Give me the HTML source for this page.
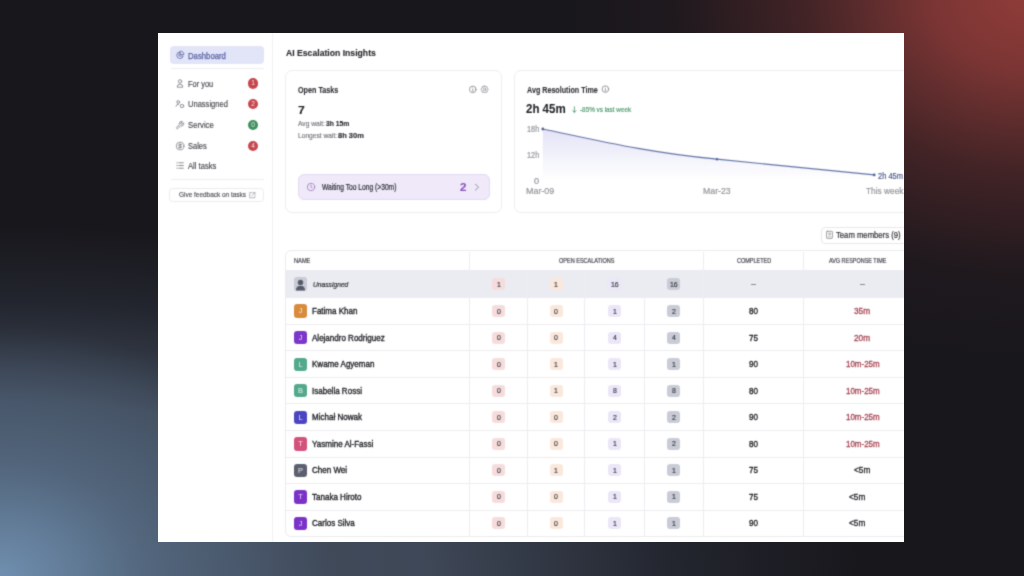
<!DOCTYPE html>
<html><head><meta charset="utf-8">
<style>
*{margin:0;padding:0;box-sizing:border-box}
html,body{width:1024px;height:576px;overflow:hidden}
body{position:relative;font-family:"Liberation Sans",sans-serif;color:#2a2b30;
background:
 radial-gradient(ellipse 470px 370px at 1030px -5px, rgba(144,60,57,1) 0%, rgba(132,56,54,.92) 20%, rgba(96,44,45,.58) 48%, rgba(50,30,34,.25) 76%, rgba(26,25,30,0) 100%),
 radial-gradient(ellipse 330px 250px at 0px 576px, rgba(114,146,180,.95) 0%, rgba(96,122,150,.55) 45%, rgba(70,86,106,0) 100%),
 radial-gradient(ellipse 860px 350px at 0px 576px, rgba(68,80,96,1) 0%, rgba(64,74,90,.95) 50%, rgba(44,50,62,.55) 78%, rgba(26,25,30,0) 100%),
 #18171c;}
.a{position:absolute}
.t{position:absolute;white-space:nowrap;line-height:1;transform-origin:0 0}
.panel{left:158px;top:33px;width:746px;height:509px;background:#fff;overflow:hidden;filter:url(#soft)}
.badge{width:10.6px;height:10.6px;border-radius:50%;color:rgba(255,255,255,.85);font-size:6.6px;text-align:center;line-height:10.6px}
.av{width:13px;height:13.4px;border-radius:3px;color:rgba(255,255,255,.85);font-size:7.4px;line-height:13.4px;text-align:center;overflow:hidden}
</style></head><body>
<svg width="0" height="0" style="position:absolute"><filter id="soft" x="0" y="0" width="100%" height="100%" color-interpolation-filters="sRGB"><feConvolveMatrix order="3" kernelMatrix="1 4 1 4 16 4 1 4 1" edgeMode="duplicate" preserveAlpha="true"/></filter></svg>
<div class="a panel">
<div class="a" style="left:0px;top:0px;width:115px;height:509px;background:#fff;border-right:1px solid #f0f0f4"></div>
<div class="a" style="left:11.8px;top:13px;width:94.4px;height:17.9px;background:#e2e5f8;border-radius:4px"></div>
<div class="a" style="left:12.5px;top:35px;width:93.7px;height:1px;background:#efeff2"></div>
<div class="a" style="left:12.5px;top:145.5px;width:93.7px;height:1px;background:#efeff2"></div>
<div class="a" style="left:11.4px;top:155.2px;width:95px;height:13.4px;border:1px solid #ececf0;border-radius:3.5px;background:#fff"></div>
<div class="a badge" style="left:89.8px;top:45px;background:#c6454d">1</div>
<div class="a badge" style="left:89.8px;top:65.9px;background:#c6454d">2</div>
<div class="a badge" style="left:89.8px;top:86.8px;background:#3f8f5f">0</div>
<div class="a badge" style="left:89.8px;top:107.6px;background:#c6454d">4</div>
<div class="a" style="left:127.3px;top:36.7px;width:216.9px;height:143.8px;border:1px solid #eeeef3;border-radius:7px;background:#fff"></div>
<div class="a" style="left:355.7px;top:36.7px;width:586.3px;height:143.8px;border:1px solid #eeeef3;border-radius:7px;background:#fff"></div>
<div class="a" style="left:140px;top:140.5px;width:192px;height:26.2px;border:1px solid #e3d9f3;border-radius:6px;background:#efe9f9"></div>
<div class="a" style="left:663.4px;top:193.5px;width:128.6px;height:17.1px;border:1px solid #e9e9ed;border-radius:4px;background:#fff"></div>
<div class="a" style="left:127.3px;top:217px;width:814.7px;height:287.2px;border:1px solid #ececf0;border-radius:6px;background:#fff"></div>
<div class="a" style="left:128.3px;top:237.2px;width:713.7px;height:27.6px;background:#ebebf2"></div>
<div class="a" style="left:128.3px;top:264.3px;width:713.7px;height:1px;background:#ededf1"></div>
<div class="a" style="left:128.3px;top:290.84px;width:713.7px;height:1px;background:#ededf1"></div>
<div class="a" style="left:128.3px;top:317.38px;width:713.7px;height:1px;background:#ededf1"></div>
<div class="a" style="left:128.3px;top:343.92px;width:713.7px;height:1px;background:#ededf1"></div>
<div class="a" style="left:128.3px;top:370.46px;width:713.7px;height:1px;background:#ededf1"></div>
<div class="a" style="left:128.3px;top:397px;width:713.7px;height:1px;background:#ededf1"></div>
<div class="a" style="left:128.3px;top:423.54px;width:713.7px;height:1px;background:#ededf1"></div>
<div class="a" style="left:128.3px;top:450.08px;width:713.7px;height:1px;background:#ededf1"></div>
<div class="a" style="left:128.3px;top:476.62px;width:713.7px;height:1px;background:#ededf1"></div>
<div class="a" style="left:311.1px;top:218.5px;width:1px;height:285px;background:#ededf1"></div>
<div class="a" style="left:544.8px;top:218.5px;width:1px;height:285px;background:#ededf1"></div>
<div class="a" style="left:645px;top:218.5px;width:1px;height:285px;background:#ededf1"></div>
<div class="a" style="left:369.3px;top:237.2px;width:1px;height:266.3px;background:#ededf1"></div>
<div class="a" style="left:425.9px;top:237.2px;width:1px;height:266.3px;background:#ededf1"></div>
<div class="a" style="left:486.1px;top:237.2px;width:1px;height:266.3px;background:#ededf1"></div>
<div class="a" style="left:334.2px;top:245px;width:13px;height:12px;background:#f6dcdc;border-radius:3px"></div>
<div class="a" style="left:391.6px;top:245px;width:13px;height:12px;background:#fbe8dc;border-radius:3px"></div>
<div class="a" style="left:450px;top:245px;width:13px;height:12px;background:#ebe7f8;border-radius:3px"></div>
<div class="a" style="left:509.45px;top:245px;width:13px;height:12px;background:#c9ccd6;border-radius:3px"></div>
<svg class="a" style="left:136px;top:244.2px" width="13" height="14" viewBox="0 0 13 14"><rect x="0" y="0" width="13" height="14" rx="3" fill="#c9cbd6"/><circle cx="6.5" cy="5.4" r="2.7" fill="#575b69"/><path d="M1.9 13.6 Q1.9 8.7 6.5 8.7 Q11.1 8.7 11.1 13.6 Z" fill="#575b69"/></svg>
<div class="a" style="left:334.2px;top:272.07px;width:13px;height:12px;background:#f6dcdc;border-radius:3px"></div>
<div class="a" style="left:391.6px;top:272.07px;width:13px;height:12px;background:#fbe8dc;border-radius:3px"></div>
<div class="a" style="left:450px;top:272.07px;width:13px;height:12px;background:#ebe7f8;border-radius:3px"></div>
<div class="a" style="left:509.45px;top:272.07px;width:13px;height:12px;background:#c9ccd6;border-radius:3px"></div>
<div class="a av" style="left:136px;top:271.47px;background:#d98b3c">J</div>
<div class="a" style="left:334.2px;top:298.61px;width:13px;height:12px;background:#f6dcdc;border-radius:3px"></div>
<div class="a" style="left:391.6px;top:298.61px;width:13px;height:12px;background:#fbe8dc;border-radius:3px"></div>
<div class="a" style="left:450px;top:298.61px;width:13px;height:12px;background:#ebe7f8;border-radius:3px"></div>
<div class="a" style="left:509.45px;top:298.61px;width:13px;height:12px;background:#c9ccd6;border-radius:3px"></div>
<div class="a av" style="left:136px;top:298.01px;background:#7c36c9">J</div>
<div class="a" style="left:334.2px;top:325.15px;width:13px;height:12px;background:#f6dcdc;border-radius:3px"></div>
<div class="a" style="left:391.6px;top:325.15px;width:13px;height:12px;background:#fbe8dc;border-radius:3px"></div>
<div class="a" style="left:450px;top:325.15px;width:13px;height:12px;background:#ebe7f8;border-radius:3px"></div>
<div class="a" style="left:509.45px;top:325.15px;width:13px;height:12px;background:#c9ccd6;border-radius:3px"></div>
<div class="a av" style="left:136px;top:324.55px;background:#52a98c">L</div>
<div class="a" style="left:334.2px;top:351.69px;width:13px;height:12px;background:#f6dcdc;border-radius:3px"></div>
<div class="a" style="left:391.6px;top:351.69px;width:13px;height:12px;background:#fbe8dc;border-radius:3px"></div>
<div class="a" style="left:450px;top:351.69px;width:13px;height:12px;background:#ebe7f8;border-radius:3px"></div>
<div class="a" style="left:509.45px;top:351.69px;width:13px;height:12px;background:#c9ccd6;border-radius:3px"></div>
<div class="a av" style="left:136px;top:351.09px;background:#52a98c">B</div>
<div class="a" style="left:334.2px;top:378.23px;width:13px;height:12px;background:#f6dcdc;border-radius:3px"></div>
<div class="a" style="left:391.6px;top:378.23px;width:13px;height:12px;background:#fbe8dc;border-radius:3px"></div>
<div class="a" style="left:450px;top:378.23px;width:13px;height:12px;background:#ebe7f8;border-radius:3px"></div>
<div class="a" style="left:509.45px;top:378.23px;width:13px;height:12px;background:#c9ccd6;border-radius:3px"></div>
<div class="a av" style="left:136px;top:377.63px;background:#4c45c2">L</div>
<div class="a" style="left:334.2px;top:404.77px;width:13px;height:12px;background:#f6dcdc;border-radius:3px"></div>
<div class="a" style="left:391.6px;top:404.77px;width:13px;height:12px;background:#fbe8dc;border-radius:3px"></div>
<div class="a" style="left:450px;top:404.77px;width:13px;height:12px;background:#ebe7f8;border-radius:3px"></div>
<div class="a" style="left:509.45px;top:404.77px;width:13px;height:12px;background:#c9ccd6;border-radius:3px"></div>
<div class="a av" style="left:136px;top:404.17px;background:#d4517c">T</div>
<div class="a" style="left:334.2px;top:431.31px;width:13px;height:12px;background:#f6dcdc;border-radius:3px"></div>
<div class="a" style="left:391.6px;top:431.31px;width:13px;height:12px;background:#fbe8dc;border-radius:3px"></div>
<div class="a" style="left:450px;top:431.31px;width:13px;height:12px;background:#ebe7f8;border-radius:3px"></div>
<div class="a" style="left:509.45px;top:431.31px;width:13px;height:12px;background:#c9ccd6;border-radius:3px"></div>
<div class="a av" style="left:136px;top:430.71px;background:#5b5f6f">P</div>
<div class="a" style="left:334.2px;top:457.85px;width:13px;height:12px;background:#f6dcdc;border-radius:3px"></div>
<div class="a" style="left:391.6px;top:457.85px;width:13px;height:12px;background:#fbe8dc;border-radius:3px"></div>
<div class="a" style="left:450px;top:457.85px;width:13px;height:12px;background:#ebe7f8;border-radius:3px"></div>
<div class="a" style="left:509.45px;top:457.85px;width:13px;height:12px;background:#c9ccd6;border-radius:3px"></div>
<div class="a av" style="left:136px;top:457.25px;background:#7b32c8">T</div>
<div class="a" style="left:334.2px;top:484.39px;width:13px;height:12px;background:#f6dcdc;border-radius:3px"></div>
<div class="a" style="left:391.6px;top:484.39px;width:13px;height:12px;background:#fbe8dc;border-radius:3px"></div>
<div class="a" style="left:450px;top:484.39px;width:13px;height:12px;background:#ebe7f8;border-radius:3px"></div>
<div class="a" style="left:509.45px;top:484.39px;width:13px;height:12px;background:#c9ccd6;border-radius:3px"></div>
<div class="a av" style="left:136px;top:483.79px;background:#7b32c8">J</div>
<svg class="a" style="left:0;top:0" width="746" height="509" viewBox="158 33 746 509">
  <defs><linearGradient id="ga" x1="0" y1="0" x2="0" y2="1"><stop offset="0" stop-color="#e3e3f6"/><stop offset="1" stop-color="#ffffff"/></linearGradient></defs>
  <g fill="none" stroke="#7e7f86" stroke-width="0.85" stroke-linecap="round" stroke-linejoin="round">
    <!-- dashboard pie -->
    <g stroke="#6b72a8" stroke-width="0.9">
      <path d="M179.2 52 A3.3 3.3 0 1 0 183.2 56 L179.2 56 Z"/>
      <path d="M180.6 51.2 A3 3 0 0 1 183.9 54.5 L180.6 54.5 Z"/>
    </g>
    <!-- person -->
    <circle cx="180" cy="81.4" r="1.7"/>
    <path d="M177.2 86.8 Q177.2 84.1 180 84.1 Q182.8 84.1 182.8 86.8 Z"/>
    <!-- unassigned -->
    <circle cx="178.2" cy="102" r="1.4"/>
    <path d="M176 106.3 Q176.4 104 178.8 104"/>
    <circle cx="182" cy="106" r="1.7"/>
    <!-- wrench -->
    <g transform="translate(175.4 120.7) scale(0.38)" stroke-width="2.3">
      <path d="M14.7 6.3a1 1 0 0 0 0 1.4l1.6 1.6a1 1 0 0 0 1.4 0l3.77-3.77a6 6 0 0 1-7.940 7.94l-6.91 6.91a2.12 2.12 0 0 1-3-3l6.91-6.910a6 6 0 0 1 7.94-7.94l-3.76 3.76z"/>
    </g>
    <!-- dollar -->
    <g transform="translate(175.5 141.4) scale(0.385)" stroke-width="2.1">
      <circle cx="12" cy="12" r="10"/>
      <path d="M16 8h-6a2 2 0 1 0 0 4h4a2 2 0 1 1 0 4H8M12 18V6"/>
    </g>
    <!-- list -->
    <path d="M176.9 162.8h.5M176.9 165.5h.5M176.9 168.2h.5M178.9 162.8h4.4M178.9 165.5h4.4M178.9 168.2h4.4" stroke-width="0.9"/>
    <!-- external link -->
    <path d="M251.6 192.6 H249.7 V197.8 H254.9 V195.9 M252.8 192.6 H254.9 V194.7 M254.9 192.6 L251.9 195.6" stroke="#9a9ba2" stroke-width="0.7"/>
    <!-- card1 info -->
    <g transform="translate(472.8 89.4) scale(0.3)" stroke-width="2.6"><circle cx="0" cy="0" r="11"/><path d="M0 -1.5 V7"/></g>
    <!-- gear -->
    <g transform="translate(484.6 89.4) scale(0.3)" stroke-width="2.4"><circle cx="0" cy="0" r="4"/><path d="M0 -12 L3 -8.5 L7.5 -9.5 L8.5 -5 L12 0 L8.5 5 L7.5 9.5 L3 8.5 L0 12 L-3 8.5 L-7.5 9.5 L-8.5 5 L-12 0 L-8.5 -5 L-7.5 -9.5 L-3 -8.5 Z"/></g>
    <!-- clock -->
    <g stroke="#9d80ba">
      <circle cx="311" cy="187" r="3.7"/>
      <path d="M311 185 V187.2 L312.3 188.1"/>
    </g>
    <!-- chevron -->
    <path d="M475.3 184.2 L478.6 187.2 L475.3 190.2" stroke="#8c8d94" stroke-width="0.9"/>
    <!-- card2 info -->
    <g transform="translate(605.4 89.1) scale(0.3)" stroke-width="2.6"><circle cx="0" cy="0" r="11"/><path d="M0 -1.5 V7"/></g>
    <!-- arrow down -->
    <path d="M574.4 106.8 V112.3 M572.7 110.6 L574.4 112.4 L576.1 110.6" stroke="#4f9a6e"/>
    <!-- team icon -->
    <rect x="826.6" y="231.3" width="5.8" height="7.1" rx="0.6" stroke="#7d7e85" stroke-width="0.75"/>
    <circle cx="829.5" cy="233.9" r="0.9" stroke="#7d7e85" stroke-width="0.6"/>
    <path d="M828 236.9 Q829.5 235.3 831 236.9" stroke="#7d7e85" stroke-width="0.6"/>
  </g>
  <circle cx="472.8" cy="87.4" r="0.45" fill="#8c8d94"/>
  <circle cx="605.4" cy="87.1" r="0.45" fill="#8c8d94"/>
  <!-- chart -->
  <path d="M542.8 129 C 600 141, 650 153, 717 159.2 C 780 165, 830 170, 874.2 174.9 L874.2 180 L542.8 180 Z" fill="url(#ga)"/>
  <path d="M542.8 129 C 600 141, 650 153, 717 159.2 C 780 165, 830 170, 874.2 174.9" fill="none" stroke="#6373a6" stroke-width="1.2"/>
  <circle cx="542.8" cy="129" r="1.4" fill="#55629a"/>
  <circle cx="717" cy="159.2" r="1.2" fill="#55629a"/>
  <circle cx="874.2" cy="174.9" r="1.4" fill="#55629a"/>
</svg>
<div class="t" style="left:30.11px;top:18.59px;font-size:8.84px;color:#5860a0;transform:scaleX(0.877);-webkit-text-stroke:0.25px #5860a0;">Dashboard</div>
<div class="t" style="left:30.03px;top:46.59px;font-size:8.84px;color:#46474e;transform:scaleX(0.840);-webkit-text-stroke:0.15px #46474e;">For you</div>
<div class="t" style="left:30.02px;top:67.29px;font-size:8.84px;color:#46474e;transform:scaleX(0.855);-webkit-text-stroke:0.15px #46474e;">Unassigned</div>
<div class="t" style="left:29.91px;top:88.49px;font-size:8.84px;color:#46474e;transform:scaleX(0.876);-webkit-text-stroke:0.15px #46474e;">Service</div>
<div class="t" style="left:29.92px;top:109.29px;font-size:8.84px;color:#46474e;transform:scaleX(0.849);-webkit-text-stroke:0.15px #46474e;">Sales</div>
<div class="t" style="left:29.92px;top:129.09px;font-size:8.84px;color:#46474e;transform:scaleX(0.863);-webkit-text-stroke:0.15px #46474e;">All tasks</div>
<div class="t" style="left:21.38px;top:158.2px;font-size:8.12px;color:#4a4b52;transform:scaleX(0.795);-webkit-text-stroke:0.15px #4a4b52;">Give feedback on tasks</div>
<div class="t" style="left:127.87px;top:15.29px;font-size:9.42px;color:#26272c;font-weight:bold;transform:scaleX(0.919);-webkit-text-stroke:0.1px #26272c;">AI Escalation Insights</div>
<div class="t" style="left:140.04px;top:52.56px;font-size:8.41px;color:#2e2f35;font-weight:bold;transform:scaleX(0.857);-webkit-text-stroke:0.1px #2e2f35;">Open Tasks</div>
<div class="t" style="left:139.79px;top:71.64px;font-size:11.59px;color:#1f2025;font-weight:bold;transform:scaleX(1.058);-webkit-text-stroke:0.1px #1f2025;">7</div>
<div class="t" style="left:140.07px;top:87.49px;font-size:7.54px;color:#7a7b82;transform:scaleX(0.885);-webkit-text-stroke:0.2px #7a7b82;">Avg wait:</div>
<div class="t" style="left:168.06px;top:87.49px;font-size:7.54px;color:#222328;font-weight:bold;transform:scaleX(0.899);-webkit-text-stroke:0.1px #222328;">3h 15m</div>
<div class="t" style="left:140.07px;top:99.39px;font-size:7.54px;color:#7a7b82;transform:scaleX(0.882);-webkit-text-stroke:0.2px #7a7b82;">Longest wait:</div>
<div class="t" style="left:180.03px;top:99.39px;font-size:7.54px;color:#222328;font-weight:bold;transform:scaleX(0.994);-webkit-text-stroke:0.1px #222328;">8h 30m</div>
<div class="t" style="left:163.67px;top:150.26px;font-size:8.41px;color:#2a2b30;transform:scaleX(0.794);-webkit-text-stroke:0.2px #2a2b30;">Waiting Too Long (&gt;30m)</div>
<div class="t" style="left:302.42px;top:149.53px;font-size:10.43px;color:#8a52b8;font-weight:bold;transform:scaleX(1.115);-webkit-text-stroke:0.1px #8a52b8;">2</div>
<div class="t" style="left:368.54px;top:52.59px;font-size:8.48px;color:#2e2f35;font-weight:bold;transform:scaleX(0.845);-webkit-text-stroke:0.1px #2e2f35;">Avg Resolution Time</div>
<div class="t" style="left:368.32px;top:70.06px;font-size:12.75px;color:#1f2025;font-weight:bold;transform:scaleX(0.902);-webkit-text-stroke:0.1px #1f2025;">2h 45m</div>
<div class="t" style="left:421.68px;top:73.29px;font-size:7.54px;color:#4f9a6e;transform:scaleX(0.842);-webkit-text-stroke:0.2px #4f9a6e;">-85% vs last week</div>
<div class="t" style="left:368.53px;top:91.91px;font-size:8.7px;color:#94959b;transform:scaleX(0.844);-webkit-text-stroke:0.2px #94959b;">18h</div>
<div class="t" style="left:368.53px;top:117.91px;font-size:8.7px;color:#94959b;transform:scaleX(0.844);-webkit-text-stroke:0.2px #94959b;">12h</div>
<div class="t" style="left:375.74px;top:143.89px;font-size:8.84px;color:#94959b;transform:scaleX(1.040);-webkit-text-stroke:0.2px #94959b;">0</div>
<div class="t" style="left:368.45px;top:152.97px;font-size:9.57px;color:#94959b;transform:scaleX(0.932);-webkit-text-stroke:0.2px #94959b;">Mar-09</div>
<div class="t" style="left:545.46px;top:152.97px;font-size:9.57px;color:#94959b;transform:scaleX(0.915);-webkit-text-stroke:0.2px #94959b;">Mar-23</div>
<div class="t" style="left:707.78px;top:153.07px;font-size:9.57px;color:#94959b;transform:scaleX(0.870);-webkit-text-stroke:0.2px #94959b;">This week</div>
<div class="t" style="left:719.63px;top:138.51px;font-size:8.7px;color:#4a5888;transform:scaleX(0.860);-webkit-text-stroke:0.2px #4a5888;">2h 45m</div>
<div class="t" style="left:678.32px;top:197.93px;font-size:8.55px;color:#2e2f35;transform:scaleX(0.900);-webkit-text-stroke:0.2px #2e2f35;">Team members (9)</div>
<div class="t" style="left:135.82px;top:224.58px;font-size:6.38px;color:#45464d;transform:scaleX(0.891);-webkit-text-stroke:0.2px #45464d;">NAME</div>
<div class="t" style="left:400.82px;top:224.62px;font-size:6.45px;color:#45464d;transform:scaleX(0.859);-webkit-text-stroke:0.2px #45464d;">OPEN ESCALATIONS</div>
<div class="t" style="left:578.72px;top:224.62px;font-size:6.45px;color:#45464d;transform:scaleX(0.855);-webkit-text-stroke:0.2px #45464d;">COMPLETED</div>
<div class="t" style="left:671.03px;top:224.62px;font-size:6.45px;color:#45464d;transform:scaleX(0.847);-webkit-text-stroke:0.2px #45464d;">AVG RESPONSE TIME</div>
<div class="t" style="left:154.87px;top:248.24px;font-size:7.25px;color:#2e2f35;font-style:italic;transform:scaleX(0.923);-webkit-text-stroke:0.2px #2e2f35;">Unassigned</div>
<div class="t" style="left:338.77px;top:247.59px;font-size:7.54px;color:#34353a;transform:scaleX(0.920);-webkit-text-stroke:0.15px #34353a;">1</div>
<div class="t" style="left:396.17px;top:247.59px;font-size:7.54px;color:#34353a;transform:scaleX(0.920);-webkit-text-stroke:0.15px #34353a;">1</div>
<div class="t" style="left:452.65px;top:247.59px;font-size:7.54px;color:#34353a;transform:scaleX(0.920);-webkit-text-stroke:0.15px #34353a;">16</div>
<div class="t" style="left:512.1px;top:247.59px;font-size:7.54px;color:#34353a;transform:scaleX(0.920);-webkit-text-stroke:0.15px #34353a;">16</div>
<div class="t" style="left:154.1px;top:274.12px;font-size:8.77px;color:#1e1f24;transform:scaleX(0.915);-webkit-text-stroke:0.35px #1e1f24;">Fatima Khan</div>
<div class="t" style="left:338.77px;top:274.66px;font-size:7.54px;color:#34353a;transform:scaleX(0.920);-webkit-text-stroke:0.15px #34353a;">0</div>
<div class="t" style="left:396.17px;top:274.66px;font-size:7.54px;color:#34353a;transform:scaleX(0.920);-webkit-text-stroke:0.15px #34353a;">0</div>
<div class="t" style="left:454.57px;top:274.66px;font-size:7.54px;color:#34353a;transform:scaleX(0.920);-webkit-text-stroke:0.15px #34353a;">1</div>
<div class="t" style="left:514.02px;top:274.66px;font-size:7.54px;color:#34353a;transform:scaleX(0.920);-webkit-text-stroke:0.15px #34353a;">2</div>
<div class="t" style="left:590.91px;top:274.03px;font-size:8.99px;color:#1e1f24;transform:scaleX(0.900);-webkit-text-stroke:0.35px #1e1f24;">80</div>
<div class="t" style="left:696.37px;top:274.03px;font-size:8.99px;color:#a3414f;transform:scaleX(0.920);-webkit-text-stroke:0.3px #a3414f;">35m</div>
<div class="t" style="left:154.1px;top:300.66px;font-size:8.77px;color:#1e1f24;transform:scaleX(0.915);-webkit-text-stroke:0.35px #1e1f24;">Alejandro Rodriguez</div>
<div class="t" style="left:338.77px;top:301.2px;font-size:7.54px;color:#34353a;transform:scaleX(0.920);-webkit-text-stroke:0.15px #34353a;">0</div>
<div class="t" style="left:396.17px;top:301.2px;font-size:7.54px;color:#34353a;transform:scaleX(0.920);-webkit-text-stroke:0.15px #34353a;">0</div>
<div class="t" style="left:454.57px;top:301.2px;font-size:7.54px;color:#34353a;transform:scaleX(0.920);-webkit-text-stroke:0.15px #34353a;">4</div>
<div class="t" style="left:514.02px;top:301.2px;font-size:7.54px;color:#34353a;transform:scaleX(0.920);-webkit-text-stroke:0.15px #34353a;">4</div>
<div class="t" style="left:590.91px;top:300.57px;font-size:8.99px;color:#1e1f24;transform:scaleX(0.900);-webkit-text-stroke:0.35px #1e1f24;">75</div>
<div class="t" style="left:696.37px;top:300.57px;font-size:8.99px;color:#a3414f;transform:scaleX(0.920);-webkit-text-stroke:0.3px #a3414f;">20m</div>
<div class="t" style="left:154.1px;top:327.2px;font-size:8.77px;color:#1e1f24;transform:scaleX(0.915);-webkit-text-stroke:0.35px #1e1f24;">Kwame Agyeman</div>
<div class="t" style="left:338.77px;top:327.74px;font-size:7.54px;color:#34353a;transform:scaleX(0.920);-webkit-text-stroke:0.15px #34353a;">0</div>
<div class="t" style="left:396.17px;top:327.74px;font-size:7.54px;color:#34353a;transform:scaleX(0.920);-webkit-text-stroke:0.15px #34353a;">1</div>
<div class="t" style="left:454.57px;top:327.74px;font-size:7.54px;color:#34353a;transform:scaleX(0.920);-webkit-text-stroke:0.15px #34353a;">1</div>
<div class="t" style="left:514.02px;top:327.74px;font-size:7.54px;color:#34353a;transform:scaleX(0.920);-webkit-text-stroke:0.15px #34353a;">1</div>
<div class="t" style="left:590.91px;top:327.11px;font-size:8.99px;color:#1e1f24;transform:scaleX(0.900);-webkit-text-stroke:0.35px #1e1f24;">90</div>
<div class="t" style="left:687.6px;top:327.11px;font-size:8.99px;color:#a3414f;transform:scaleX(0.887);-webkit-text-stroke:0.3px #a3414f;">10m-25m</div>
<div class="t" style="left:154.1px;top:353.74px;font-size:8.77px;color:#1e1f24;transform:scaleX(0.915);-webkit-text-stroke:0.35px #1e1f24;">Isabella Rossi</div>
<div class="t" style="left:338.77px;top:354.28px;font-size:7.54px;color:#34353a;transform:scaleX(0.920);-webkit-text-stroke:0.15px #34353a;">0</div>
<div class="t" style="left:396.17px;top:354.28px;font-size:7.54px;color:#34353a;transform:scaleX(0.920);-webkit-text-stroke:0.15px #34353a;">1</div>
<div class="t" style="left:454.57px;top:354.28px;font-size:7.54px;color:#34353a;transform:scaleX(0.920);-webkit-text-stroke:0.15px #34353a;">8</div>
<div class="t" style="left:514.02px;top:354.28px;font-size:7.54px;color:#34353a;transform:scaleX(0.920);-webkit-text-stroke:0.15px #34353a;">8</div>
<div class="t" style="left:590.91px;top:353.65px;font-size:8.99px;color:#1e1f24;transform:scaleX(0.900);-webkit-text-stroke:0.35px #1e1f24;">80</div>
<div class="t" style="left:687.6px;top:353.65px;font-size:8.99px;color:#a3414f;transform:scaleX(0.887);-webkit-text-stroke:0.3px #a3414f;">10m-25m</div>
<div class="t" style="left:154.1px;top:380.28px;font-size:8.77px;color:#1e1f24;transform:scaleX(0.915);-webkit-text-stroke:0.35px #1e1f24;">Michał Nowak</div>
<div class="t" style="left:338.77px;top:380.82px;font-size:7.54px;color:#34353a;transform:scaleX(0.920);-webkit-text-stroke:0.15px #34353a;">0</div>
<div class="t" style="left:396.17px;top:380.82px;font-size:7.54px;color:#34353a;transform:scaleX(0.920);-webkit-text-stroke:0.15px #34353a;">0</div>
<div class="t" style="left:454.57px;top:380.82px;font-size:7.54px;color:#34353a;transform:scaleX(0.920);-webkit-text-stroke:0.15px #34353a;">2</div>
<div class="t" style="left:514.02px;top:380.82px;font-size:7.54px;color:#34353a;transform:scaleX(0.920);-webkit-text-stroke:0.15px #34353a;">2</div>
<div class="t" style="left:590.91px;top:380.19px;font-size:8.99px;color:#1e1f24;transform:scaleX(0.900);-webkit-text-stroke:0.35px #1e1f24;">90</div>
<div class="t" style="left:687.6px;top:380.19px;font-size:8.99px;color:#a3414f;transform:scaleX(0.887);-webkit-text-stroke:0.3px #a3414f;">10m-25m</div>
<div class="t" style="left:154.1px;top:406.82px;font-size:8.77px;color:#1e1f24;transform:scaleX(0.915);-webkit-text-stroke:0.35px #1e1f24;">Yasmine Al-Fassi</div>
<div class="t" style="left:338.77px;top:407.36px;font-size:7.54px;color:#34353a;transform:scaleX(0.920);-webkit-text-stroke:0.15px #34353a;">0</div>
<div class="t" style="left:396.17px;top:407.36px;font-size:7.54px;color:#34353a;transform:scaleX(0.920);-webkit-text-stroke:0.15px #34353a;">0</div>
<div class="t" style="left:454.57px;top:407.36px;font-size:7.54px;color:#34353a;transform:scaleX(0.920);-webkit-text-stroke:0.15px #34353a;">1</div>
<div class="t" style="left:514.02px;top:407.36px;font-size:7.54px;color:#34353a;transform:scaleX(0.920);-webkit-text-stroke:0.15px #34353a;">2</div>
<div class="t" style="left:590.91px;top:406.73px;font-size:8.99px;color:#1e1f24;transform:scaleX(0.900);-webkit-text-stroke:0.35px #1e1f24;">80</div>
<div class="t" style="left:687.6px;top:406.73px;font-size:8.99px;color:#a3414f;transform:scaleX(0.887);-webkit-text-stroke:0.3px #a3414f;">10m-25m</div>
<div class="t" style="left:154.1px;top:433.36px;font-size:8.77px;color:#1e1f24;transform:scaleX(0.915);-webkit-text-stroke:0.35px #1e1f24;">Chen Wei</div>
<div class="t" style="left:338.77px;top:433.9px;font-size:7.54px;color:#34353a;transform:scaleX(0.920);-webkit-text-stroke:0.15px #34353a;">0</div>
<div class="t" style="left:396.17px;top:433.9px;font-size:7.54px;color:#34353a;transform:scaleX(0.920);-webkit-text-stroke:0.15px #34353a;">1</div>
<div class="t" style="left:454.57px;top:433.9px;font-size:7.54px;color:#34353a;transform:scaleX(0.920);-webkit-text-stroke:0.15px #34353a;">1</div>
<div class="t" style="left:514.02px;top:433.9px;font-size:7.54px;color:#34353a;transform:scaleX(0.920);-webkit-text-stroke:0.15px #34353a;">1</div>
<div class="t" style="left:590.91px;top:433.27px;font-size:8.99px;color:#1e1f24;transform:scaleX(0.900);-webkit-text-stroke:0.35px #1e1f24;">75</div>
<div class="t" style="left:696.26px;top:433.27px;font-size:8.99px;color:#1e1f24;transform:scaleX(0.920);-webkit-text-stroke:0.3px #1e1f24;">&lt;5m</div>
<div class="t" style="left:154.1px;top:459.9px;font-size:8.77px;color:#1e1f24;transform:scaleX(0.915);-webkit-text-stroke:0.35px #1e1f24;">Tanaka Hiroto</div>
<div class="t" style="left:338.77px;top:460.44px;font-size:7.54px;color:#34353a;transform:scaleX(0.920);-webkit-text-stroke:0.15px #34353a;">0</div>
<div class="t" style="left:396.17px;top:460.44px;font-size:7.54px;color:#34353a;transform:scaleX(0.920);-webkit-text-stroke:0.15px #34353a;">0</div>
<div class="t" style="left:454.57px;top:460.44px;font-size:7.54px;color:#34353a;transform:scaleX(0.920);-webkit-text-stroke:0.15px #34353a;">1</div>
<div class="t" style="left:514.02px;top:460.44px;font-size:7.54px;color:#34353a;transform:scaleX(0.920);-webkit-text-stroke:0.15px #34353a;">1</div>
<div class="t" style="left:590.91px;top:459.81px;font-size:8.99px;color:#1e1f24;transform:scaleX(0.900);-webkit-text-stroke:0.35px #1e1f24;">75</div>
<div class="t" style="left:691.36px;top:459.81px;font-size:8.99px;color:#1e1f24;transform:scaleX(0.920);-webkit-text-stroke:0.3px #1e1f24;">&lt;5m</div>
<div class="t" style="left:154.1px;top:486.44px;font-size:8.77px;color:#1e1f24;transform:scaleX(0.915);-webkit-text-stroke:0.35px #1e1f24;">Carlos Silva</div>
<div class="t" style="left:338.77px;top:486.98px;font-size:7.54px;color:#34353a;transform:scaleX(0.920);-webkit-text-stroke:0.15px #34353a;">0</div>
<div class="t" style="left:396.17px;top:486.98px;font-size:7.54px;color:#34353a;transform:scaleX(0.920);-webkit-text-stroke:0.15px #34353a;">0</div>
<div class="t" style="left:454.57px;top:486.98px;font-size:7.54px;color:#34353a;transform:scaleX(0.920);-webkit-text-stroke:0.15px #34353a;">1</div>
<div class="t" style="left:514.02px;top:486.98px;font-size:7.54px;color:#34353a;transform:scaleX(0.920);-webkit-text-stroke:0.15px #34353a;">1</div>
<div class="t" style="left:590.91px;top:486.35px;font-size:8.99px;color:#1e1f24;transform:scaleX(0.900);-webkit-text-stroke:0.35px #1e1f24;">90</div>
<div class="t" style="left:691.36px;top:486.35px;font-size:8.99px;color:#1e1f24;transform:scaleX(0.920);-webkit-text-stroke:0.3px #1e1f24;">&lt;5m</div>
<div class="a" style="left:592.60px;top:250.60px;width:5.6px;height:0.9px;background:#8a8b92"></div>
<div class="a" style="left:701.60px;top:250.60px;width:5.6px;height:0.9px;background:#8a8b92"></div>
</div>
</body></html>
